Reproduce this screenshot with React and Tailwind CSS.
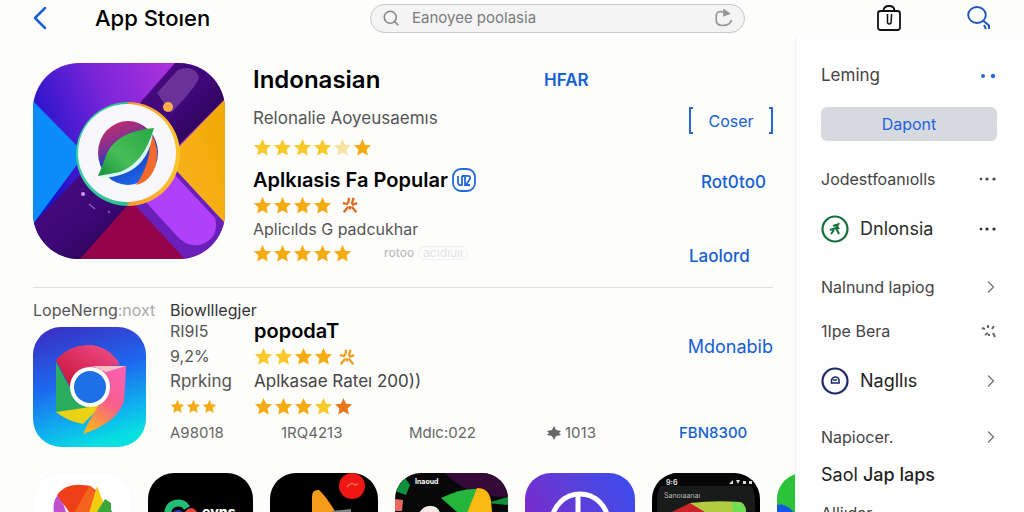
import { ChevronLeft, ChevronRight, Search } from 'lucide-react'
import clsx from 'clsx'

const GOLD = '#f5ab12'
const SUN = '#f9c929'
const PALE = '#f8e3a0'
const EMBER = '#e8761c'

const STAR_PATH = 'M10 1l2.7 6 6.3.7-4.7 4.4 1.3 6.4L10 15.3l-5.6 3.2 1.3-6.4L1 7.700l6.300-.7z'

function Star({ color, small }) {
  return (
    <svg viewBox="0 0 20 20" className={small ? 'size-[15px]' : 'size-[19px]'} fill={color}>
      <path d={STAR_PATH} />
    </svg>
  )
}

function Burst({ color }) {
  return (
    <svg viewBox="0 0 20 20" className="size-[18px]" stroke={color} strokeWidth="2.600" fill="none">
      <path d="M9 2l-1 6M14 2l-2 7M2 8l6 1M18 8l-6 2M3 18l5-6M10 11v4M17 18l-5-6" />
    </svg>
  )
}

function Rating({ stars, small, burst, burstColor = '#dd6b20' }) {
  return (
    <div className="flex items-center gap-px" role="img" aria-label="Rating">
      {stars.map((color, i) => <Star key={i} color={color} small={small} />)}
      {burst && <span className={burst}><Burst color={burstColor} /></span>}
    </div>
  )
}

function LinkButton({ className, children }) {
  return (
    <button className={clsx('text-[#1560d4] whitespace-nowrap', className)}>{children}</button>
  )
}

function Header() {
  return (
    <header className="flex items-center h-9 shrink-0 pl-5 pr-8">
      <button aria-label="Back" className="w-[75px] text-[#1d5fd6]">
        <ChevronLeft size={40} strokeWidth={1.5} />
      </button>
      <h1 className="w-[275px] text-[22px] font-medium">App Stoıen</h1>
      <label className="flex items-center w-[375px] h-[29px] px-[11px] rounded-full border border-[#c6c8ca] bg-[#f3f4f3] text-[#858585]">
        <Search size={18} strokeWidth={2} />
        <input
          type="text"
          aria-label="Search"
          placeholder="Eanoyee poolasia"
          className="flex-1 min-w-0 ml-3 bg-transparent text-[15px] placeholder-[#7c7c7c] outline-none"
        />
        <svg viewBox="0 0 18 18" className="size-[18px]" fill="none" stroke="#979797" strokeWidth="1.700">
          <path d="M7 2.500H5Q1.200 3 1.200 7v4q0 5.500 6.300 5.500 7.500 0 9-5.500M5 2.500l8 2" />
          <path d="M9 1l5 3.500-5 2z" fill="#979797" />
        </svg>
      </label>
      <div className="flex-1" />
      <button aria-label="Bag" className="mr-[64px]">
        <svg viewBox="0 0 26 28" className="w-[26px] h-7" fill="none" stroke="#111" strokeWidth="1.800">
          <rect x="2" y="7" width="22" height="19" rx="2.500" />
          <path d="M7.500 7q0-5 5.500-5t5.500 5" />
          <path d="M11.500 10v8q0 2 1.800 2t1.800-2l.5-8" strokeWidth="1.500" />
        </svg>
      </button>
      <button aria-label="Find">
        <svg viewBox="0 0 26 26" className="size-[26px]" fill="none" stroke="#1c55bd" strokeWidth="1.900">
          <ellipse cx="11" cy="10" rx="8.800" ry="8" />
          <path d="M17 15.500l6 5M23 20v4M18 20l2 4" />
        </svg>
      </button>
    </header>
  )
}

function CrossIcon() {
  return (
    <svg viewBox="0 0 192 196" className="w-48 h-[196px] shrink-0 rounded-[46px]">
      <defs>
        <linearGradient id="sky" x1="0" y1=".4" x2="1" y2="0">
          <stop offset="0" stopColor="#1d12c9" />
          <stop offset=".4" stopColor="#7a25d8" />
          <stop offset="1" stopColor="#cf3bdf" />
        </linearGradient>
        <linearGradient id="arm" x1="0" y1="0" x2="1" y2="1">
          <stop offset="0" stopColor="#4a0b80" />
          <stop offset=".5" stopColor="#3d0878" />
          <stop offset="1" stopColor="#20003f" />
        </linearGradient>
        <linearGradient id="ring" x1="0" y1=".5" x2="1" y2=".5">
          <stop offset="0" stopColor="#35cfa4" />
          <stop offset=".48" stopColor="#2fbf8f" />
          <stop offset=".52" stopColor="#f79a33" />
          <stop offset="1" stopColor="#fbc62a" />
        </linearGradient>
        <linearGradient id="globe" x1=".1" y1="0" x2=".5" y2="1">
          <stop offset="0" stopColor="#d02a62" />
          <stop offset=".4" stopColor="#7b3296" />
          <stop offset=".6" stopColor="#1b3fc4" />
          <stop offset="1" stopColor="#1d63e6" />
        </linearGradient>
        <linearGradient id="leaf" x1="1" y1="0" x2="0" y2="1">
          <stop offset="0" stopColor="#27a844" />
          <stop offset=".6" stopColor="#47bd58" />
          <stop offset="1" stopColor="#16903a" />
        </linearGradient>
        <linearGradient id="sun" x1="0" y1="1" x2="1" y2="0">
          <stop offset="0" stopColor="#fbb324" />
          <stop offset="1" stopColor="#f0a800" />
        </linearGradient>
      </defs>
      <rect width="192" height="196" fill="url(#sky)" />
      <path d="M0 38l52 53-52 70z" fill="#0b8cfb" />
      <path d="M0 161l50-52 60 26-63 61H0z" fill="url(#arm)" />
      <path d="M47 196l53-60 52 60z" fill="#93044a" />
      <path d="M100 140l42-34 50 54v36h-40z" fill="#6a1fb8" />
      <path d="M112 138l30-26 40 43q5 20-15 27-14 2-24-10z" fill="#b140fb" />
      <path d="M142 88l50-52v124l-50-54z" fill="url(#sun)" />
      <path d="M142 0l-35 40 38 43 47-47V0z" fill="url(#arm)" />
      <path d="M124 30l21-23q16-6 21 7-1 8-28 36z" fill="#6c3199" />
      <circle cx="135" cy="44" r="5" fill="#fbab4c" />
      <circle cx="50" cy="131" r="2" fill="#c9a2f5" />
      <path d="M56 141l6 5M75 148l2 2" stroke="#8d58c8" strokeWidth="1.500" />
      <circle cx="95" cy="91" r="52" fill="url(#ring)" />
      <circle cx="94" cy="90" r="49" fill="#f8f7fb" />
      <ellipse cx="95" cy="90" rx="30" ry="32" fill="url(#globe)" />
      <path d="M118 70q9 16 5 31-5 18-20 21 14-20 14-44z" fill="#f36b2c" />
      <path d="M120 66q-3 46-50 49l-5-2z" fill="#d9f6fb" />
      <path d="M121 65q-36 3-47 25-4 12-9 23l22-4q24-9 34-44z" fill="url(#leaf)" />
    </svg>
  )
}

function PinwheelIcon() {
  return (
    <svg viewBox="0 0 113 120" className="w-[113px] h-[120px] shrink-0 mt-2 rounded-[28px]">
      <defs>
        <linearGradient id="sea" x1=".2" y1="0" x2=".5" y2="1">
          <stop offset="0" stopColor="#3a30c4" />
          <stop offset=".45" stopColor="#1d68ee" />
          <stop offset=".8" stopColor="#0fb3ee" />
          <stop offset="1" stopColor="#07dfe0" />
        </linearGradient>
        <linearGradient id="petal" x1=".7" y1="0" x2=".3" y2="1">
          <stop offset="0" stopColor="#fb5fb0" />
          <stop offset=".5" stopColor="#f95f8b" />
          <stop offset="1" stopColor="#fbb31d" />
        </linearGradient>
        <linearGradient id="rose" x1="1" y1="0" x2="0" y2="1">
          <stop offset="0" stopColor="#f0508c" />
          <stop offset="1" stopColor="#c50f34" />
        </linearGradient>
      </defs>
      <rect width="113" height="120" fill="url(#sea)" />
      <path d="M23 33q14-16 36-15 19 3 28 20l-34 3-16 19z" fill="url(#rose)" />
      <path d="M23 35l14 26 33 20-47 4z" fill="#2aad5e" />
      <path d="M23 85q22-3 46-7l-19 19q-16-3-27-12z" fill="#ecd214" />
      <path d="M57 39h36q-1 22-2 35-7 22-41 33 6-14 14-26l14-23z" fill="url(#petal)" />
      <path d="M60 39h33l-20 6z" fill="#f6c4c7" />
      <circle cx="57" cy="60" r="20" fill="#fff" />
      <circle cx="57" cy="60" r="16" fill="#1f6fe6" />
    </svg>
  )
}

function FeaturedApp() {
  return (
    <section className="flex pb-[19px] border-b border-[#dfdfdf]">
      <CrossIcon />
      <div className="flex-1 ml-7">
        <h2 className="text-2xl leading-[34px] font-semibold">Indonasian</h2>
        <p className="text-[17px] leading-[42px] text-[#555] whitespace-nowrap">Relonalie Aoyeusaemıs</p>
        <div className="h-4 flex items-center">
          <Rating stars={[SUN, SUN, SUN, SUN, PALE, GOLD]} />
        </div>
        <h3 className="flex items-center mt-2 text-xl leading-[34px] font-semibold whitespace-nowrap">
          Aplkıasis Fa Popular
          <svg viewBox="0 0 24 24" className="size-6 ml-1" fill="none" stroke="#2468dc" strokeWidth="1.800">
            <rect x="1" y="1" width="22" height="22" rx="8" />
            <path d="M6 8v6q0 4 4 3V8M10 8h2M13 7v10h5M14 8q5-1 4 3l-4 6" />
          </svg>
        </h3>
        <div className="h-4 flex items-center">
          <Rating stars={[GOLD, GOLD, GOLD, GOLD]} burst="ml-2" />
        </div>
        <p className="text-base leading-8 text-[#555]">Aplicılds G padcukhar</p>
        <div className="h-4 flex items-center">
          <Rating stars={[GOLD, GOLD, GOLD, GOLD, GOLD]} />
          <span className="ml-8 text-xs font-medium text-[#bdbdbd]">rotoo</span>
          <span className="ml-1 px-1 rounded-full border border-[#efefef] text-xs leading-[12px] text-[#e2e2e2]">acıdıuıı</span>
        </div>
      </div>
      <div className="w-[145px]">
        <LinkButton className="text-[17px] leading-[34px] font-semibold">HFAR</LinkButton>
      </div>
      <div className="flex flex-col items-start w-[84px] pt-11">
        <LinkButton className="flex justify-between items-center w-full h-[27px] text-base">
          <span className="w-1 h-full border-2 border-r-0 border-[#2a68cc]" />
          Coser
          <span className="w-1 h-full border-2 border-l-0 border-[#2a68cc]" />
        </LinkButton>
        <LinkButton className="mt-9 ml-3 text-[17px] leading-6 font-medium">Rot0to0</LinkButton>
        <LinkButton className="mt-[50px] text-[17px] leading-6 font-medium">Laolord</LinkButton>
      </div>
    </section>
  )
}

function RankedApp() {
  return (
    <section className="mt-[13px]">
      <div className="flex text-base leading-[18px] whitespace-nowrap">
        <h2 className="w-[137px] text-[#555]">LopeNerng<span className="text-[#aaa]">:noxt</span></h2>
        <h2 className="text-[#333]">Biowlllegjer</h2>
      </div>
      <div className="flex">
        <PinwheelIcon />
        <div className="flex-1 ml-6 leading-[25px]">
          <div className="flex">
            <div className="w-[84px] text-base leading-[25px] text-[#555]">
              <p>RI9I5</p>
              <p>9,2%</p>
              <p className="text-[17px] leading-[25px]">Rprking</p>
              <div className="h-[25px] flex items-center">
                <Rating stars={[GOLD, GOLD, GOLD]} small />
              </div>
            </div>
            <div className="flex-1">
              <h3 className="text-xl leading-[25px] font-semibold">popodaT</h3>
              <div className="h-[25px] flex items-center">
                <Rating stars={[SUN, SUN, GOLD, GOLD]} burst="ml-1" burstColor="#eda022" />
              </div>
              <p className="text-[17px] leading-[25px] text-[#444]">Aplkasae Rateı 200))</p>
              <div className="h-[25px] flex items-center">
                <Rating stars={[GOLD, GOLD, GOLD, SUN, EMBER]} />
              </div>
            </div>
            <LinkButton className="self-start mt-[14px] text-lg">Mdonabib</LinkButton>
          </div>
          <div className="grid grid-cols-[111px_128px_138px_132px_1fr] text-[15px] leading-[27px] text-[#666]">
            <span>A98018</span>
            <span>1RQ4213</span>
            <span>Mdıc:022</span>
            <span className="flex items-center gap-1">
              <svg viewBox="0 0 14 14" className="size-[14px]" fill="#666">
                <path d="M7 0l2 4 5 1-2 2 2 2-5 1-2 4-2-4-5-1 2-2-2-2 5-1z" />
              </svg>
              1013
            </span>
            <LinkButton className="text-left font-medium">FBN8300</LinkButton>
          </div>
        </div>
      </div>
    </section>
  )
}

function AppShelf() {
  const tile = 'h-[110px] shrink-0 rounded-[26px]'
  return (
    <section className="flex gap-[17px] mt-[26px] pl-px">
      <svg viewBox="0 0 97 110" className={clsx(tile, 'w-[97px] bg-white shadow-[0_0_2px_rgba(0,0,0,0.06)]')}>
        <path d="M21 45q-4-16 3-23 8 7 13 45z" fill="#c04fd0" />
        <path d="M23 22q9-12 25-10 12 0 15 8L50 60z" fill="#ee3f18" />
        <path d="M40 40l16-28 9 13-15 30z" fill="#f4641c" />
        <path d="M49 60L63 13l7 18-12 30z" fill="#f2cc12" />
        <path d="M56 50l15-24 6 4v7l6 8-10 12z" fill="#3aa63c" />
      </svg>
      <svg viewBox="0 0 105 110" className={clsx(tile, 'w-[105px] bg-black')}>
        <path d="M20 46q-2-16 11-16 5 0 8 5" fill="none" stroke="#22bd77" strokeWidth="7" />
        <circle cx="30" cy="43" r="6" fill="#343bd0" />
        <circle cx="43" cy="41" r="6" fill="#e8433c" />
        <text x="54" y="44" fill="#fff" fontSize="14" fontWeight="800">evns</text>
      </svg>
      <svg viewBox="0 0 108 110" className={clsx(tile, 'w-[108px] bg-black')}>
        <path d="M42 60V24q0-8 7-7 8 7 20 28v15z" fill="#f79c1a" />
        <path d="M62 38l19-2v12H66z" fill="#7b8581" />
        <circle cx="82" cy="13" r="13" fill="#ef1713" />
        <path d="M77 14q5-6 8-2l3-1" stroke="#ff6450" strokeWidth="1.500" fill="none" />
      </svg>
      <svg viewBox="0 0 113 110" className={clsx(tile, 'w-[113px] bg-[#090809]')}>
        <path d="M50 0h63v24Q72 24 50 0z" fill="#340a39" />
        <path d="M0 18l10-13 5 7-4 10zM92 30l21-6v8z" fill="#12913d" />
        <path d="M0 26l8 1-1 11H0z" fill="#e56a60" />
        <path d="M46 25q20-10 36-9L70 46z" fill="#24b53b" />
        <path d="M82 15q12 0 14 13l2 22H68z" fill="#fbba12" />
        <path d="M24 40q5-8 12-7 8 0 10 10z" fill="#f8e9e7" />
        <text x="20" y="11" fill="#fff" fontSize="7" fontWeight="700">Inaoud</text>
      </svg>
      <svg viewBox="0 0 110 110" className={clsx(tile, 'w-[110px]')}>
        <defs>
          <linearGradient id="dusk" x1="0" y1=".6" x2="1" y2="0">
            <stop offset="0" stopColor="#8127ca" />
            <stop offset=".6" stopColor="#5443dc" />
            <stop offset="1" stopColor="#394cf0" />
          </linearGradient>
        </defs>
        <rect width="110" height="110" fill="url(#dusk)" />
        <circle cx="55" cy="49" r="28" fill="none" stroke="#fff" strokeWidth="5" />
        <path d="M53 22v50" stroke="#fff" strokeWidth="5" />
      </svg>
      <svg viewBox="0 0 108 110" className={clsx(tile, 'w-[108px] bg-black')}>
        <rect x="5" y="5" width="98" height="105" rx="20" fill="#191b1b" />
        <path d="M5 13h98V4L80 0H20z" fill="#070707" />
        <text x="14" y="12" fill="#ddd" fontSize="7" fontWeight="700">9:6</text>
        <text x="12" y="25" fill="#b4b4b4" fontSize="7">Sanoıaanaı</text>
        <path d="M77 11l4-4v4zM84 7h4l-2 4zM91 8h3v3h-3zM97 8h3v3h-3z" fill="#ddd" />
        <path d="M18 40l20-10h20l-6 20H20z" fill="#cb2428" />
        <path d="M38 30q25-3 50-1 6 1 6 12H56z" fill="#b2cb43" />
        <path d="M80 29q12-1 14 8v8H82z" fill="#6fe053" />
      </svg>
      <svg viewBox="0 0 108 110" className={clsx(tile, 'w-[108px] bg-[#2bc23a]')}>
        <path d="M0 32q10-3 20 12v60H0z" fill="#1457e8" />
      </svg>
    </section>
  )
}

function Dots({ count = 3, className }) {
  return (
    <svg viewBox="0 0 20 6" className={clsx('w-5 h-[6px]', className)} fill="currentColor">
      {count === 3 && <circle cx="4" cy="3" r="1.300" />}
      <circle cx={count === 3 ? 10 : 6} cy="3" r={count === 3 ? 1.6 : 2} />
      <circle cx={count === 3 ? 17 : 16} cy="3" r={count === 3 ? 1.6 : 2.2} />
    </svg>
  )
}

function Chevron() {
  return <ChevronRight size={20} strokeWidth={1.6} className="-mr-1 text-[#777]" />
}

function SideRow({ className, children, end }) {
  return (
    <li className={clsx('flex items-center justify-between h-[26px] whitespace-nowrap', className)}>
      <a href="#" className="flex items-center gap-[11px]">{children}</a>
      {end}
    </li>
  )
}

function Sidebar() {
  return (
    <aside className="w-[229px] shrink-0 pl-[25px] pr-[27px] pt-[27px] bg-[#fefefe] border-l border-[#f1f1f1] text-base text-[#444]">
      <div className="flex items-center justify-between h-[26px]">
        <h2 className="text-[17px]">Leming</h2>
        <Dots count={2} className="text-[#2e6cd0]" />
      </div>
      <button className="w-full h-[34px] mt-[18px] rounded-md bg-[#d6d9de] text-base text-[#1f62e4]">Dapont</button>
      <ul>
        <SideRow className="mt-[25px]" end={<Dots />}>Jodestfoanıolls</SideRow>
        <SideRow className="mt-6 text-lg text-[#2b2b2b]" end={<Dots />}>
          <svg viewBox="0 0 28 28" className="size-7" fill="none" stroke="#16703c" strokeWidth="2.200">
            <circle cx="14" cy="14" r="12.500" />
            <path d="M18 8l-3 5-6 2M15 13l3 6M13 15l-3 4M12 11l3-1 3 4" strokeWidth="2" />
          </svg>
          Dnlonsia
        </SideRow>
        <SideRow className="mt-8" end={<Chevron />}>Nalnund lapiog</SideRow>
        <SideRow
          className="mt-[18px]"
          end={
            <svg viewBox="0 0 16 16" className="size-4" stroke="#666" strokeWidth="2">
              <path d="M1 5l3 1M7 2v3M13 3l-2 3M4 12l3-2M8 13v-2M12 10l2 4" />
            </svg>
          }
        >
          1Ipe Bera
        </SideRow>
        <SideRow className="mt-6 text-lg text-[#222]" end={<Chevron />}>
          <svg viewBox="0 0 28 28" className="size-7" fill="none" stroke="#1b2a68" strokeWidth="2.200">
            <circle cx="14" cy="14" r="12.500" />
            <path d="M10.500 16v-3q1-3 4-3t3.500 3v3zM12 13h4" strokeWidth="1.600" />
          </svg>
          Nagllıs
        </SideRow>
        <SideRow className="mt-[30px]" end={<Chevron />}>Napiocer.</SideRow>
        <SideRow className="mt-3 text-lg text-[#222]">
          <span>Saol <span className="font-medium">Jap laps</span></span>
        </SideRow>
        <SideRow className="mt-3">Alliıdar</SideRow>
      </ul>
    </aside>
  )
}

export default function App() {
  return (
    <div className="flex flex-col h-screen overflow-hidden bg-[#fdfdfc] font-['Inter','Liberation_Sans',sans-serif] text-black">
      <Header />
      <div className="flex flex-1 min-h-0">
        <main className="flex-1 min-w-0 overflow-hidden pl-[33px] pr-[22px] pt-[27px]">
          <FeaturedApp />
          <RankedApp />
          <AppShelf />
        </main>
        <Sidebar />
      </div>
    </div>
  )
}
